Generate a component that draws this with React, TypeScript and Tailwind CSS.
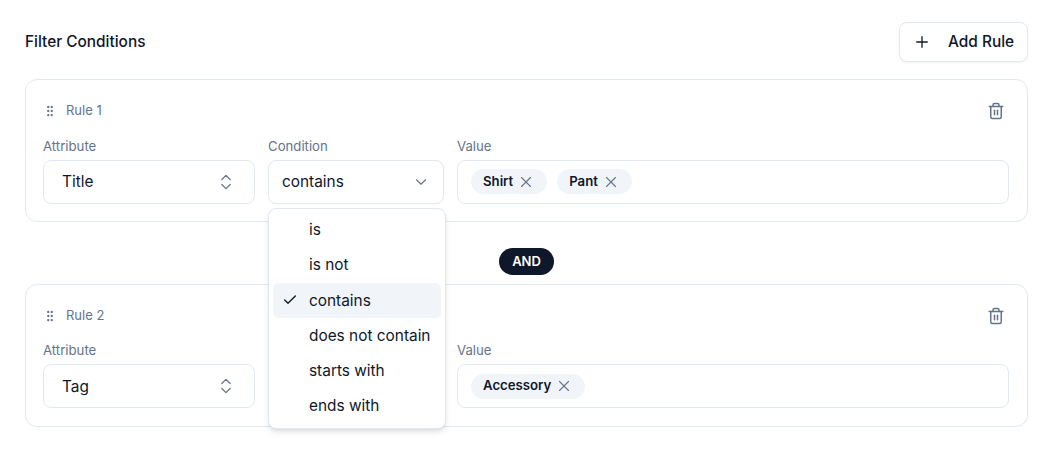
import React from "react";
import { Check, ChevronDown, ChevronsUpDown, GripVertical, Plus, Trash2, X } from "lucide-react";

const options = ["is", "is not", "contains", "does not contain", "starts with", "ends with"];

function Chip({ label }: { label: string }) {
  return (
    <span className="flex h-[25px] items-center gap-1 rounded-full bg-[#f1f5f9] pl-3 pr-3 text-[13.2px] font-semibold text-[#0f172a]">
      {label}
      <X className="size-[18px] text-[#64748b]" strokeWidth={1.5} />
    </span>
  );
}

function Select({ value, icon, className }: { value: string; icon: React.ReactNode; className: string }) {
  return (
    <div className={`flex h-11 items-center justify-between rounded-lg border border-[#e2e8f0] bg-white text-[15.4px] text-[#0f172a] ${className}`}>
      {value}
      {icon}
    </div>
  );
}

function Rule({ name, attribute, chips, hideCondition }: { name: string; attribute: string; chips: string[]; hideCondition?: boolean }) {
  return (
    <div className="rounded-xl border border-[#e2e8f0] bg-white pl-[17px] pr-[18px] pt-[18px] pb-[17.4px]">
      <div className="flex h-[26px] items-center justify-between">
        <div className="flex items-center gap-[9px] text-[13px] text-[#64748b]">
          <GripVertical className="size-[14px]" />
          {name}
        </div>
        <Trash2 className="mr-1 size-[18px] text-[#64748b]" strokeWidth={2} />
      </div>
      <div className="mt-[12.6px] grid grid-cols-[212px_176px_1fr] gap-x-[13px]">
        <div>
          <div className="mb-[5px] h-[18px] text-[13.2px] leading-[18px] text-[#64748b]">Attribute</div>
          <Select value={attribute} className="pl-[18px] pr-[18px]" icon={<ChevronsUpDown className="size-5 text-[#64748b]" strokeWidth={1.5} />} />
        </div>
        <div>
          {!hideCondition && (
            <>
              <div className="mb-[5px] h-[18px] text-[13.2px] leading-[18px] text-[#64748b]">Condition</div>
              <Select value="contains" className="pl-[13px] pr-[13px]" icon={<ChevronDown className="size-[18px] text-[#64748b]" strokeWidth={1.5} />} />
            </>
          )}
        </div>
        <div>
          <div className="mb-[5px] h-[18px] text-[13.2px] leading-[18px] text-[#64748b]">Value</div>
          <div className="flex h-11 items-center gap-[10px] rounded-lg border border-[#e2e8f0] bg-white px-[13px]">
            {chips.map((c) => (
              <Chip key={c} label={c} />
            ))}
          </div>
        </div>
      </div>
    </div>
  );
}

export default function App() {
  return (
    <div className="relative h-[452px] w-[1052px] overflow-hidden bg-white pl-[25px] pr-6 pt-[22px] font-['Inter',sans-serif]">
      <div className="flex items-center justify-between">
        <h2 className="text-[15.4px] font-medium text-[#0f172a]">Filter Conditions</h2>
        <button className="flex h-10 w-[129px] items-center gap-[17px] rounded-lg border border-[#e2e8f0] bg-white pl-[13px] text-[15.4px] font-medium text-[#0f172a] shadow-xs">
          <Plus className="size-[18px]" strokeWidth={1.75} />
          Add Rule
        </button>
      </div>
      <div className="mt-[17px]">
        <Rule name="Rule 1" attribute="Title" chips={["Shirt", "Pant"]} />
        <div className="flex h-[61.7px] justify-center pt-[26px]">
          <span className="flex h-[27px] w-[55px] items-center justify-center rounded-full bg-[#0f172a] text-[13px] font-semibold text-white">AND</span>
        </div>
        <Rule name="Rule 2" attribute="Tag" chips={["Accessory"]} hideCondition />
      </div>
      <div className="absolute left-[268px] top-[207.6px] w-[178px] rounded-lg border border-[#e2e8f0] bg-white px-1 pt-[3.5px] pb-[4.2px] shadow-md">
        {options.map((o) => (
          <div key={o} className={`flex h-[35.25px] items-center rounded-md text-[15.4px] text-[#0f172a] ${o === "contains" ? "bg-[#f1f5f9]" : ""}`}>
            <span className="flex w-[36px] justify-center pr-[3px]">
              {o === "contains" && <Check className="size-4" strokeWidth={2} />}
            </span>
            {o}
          </div>
        ))}
      </div>
    </div>
  );
}
